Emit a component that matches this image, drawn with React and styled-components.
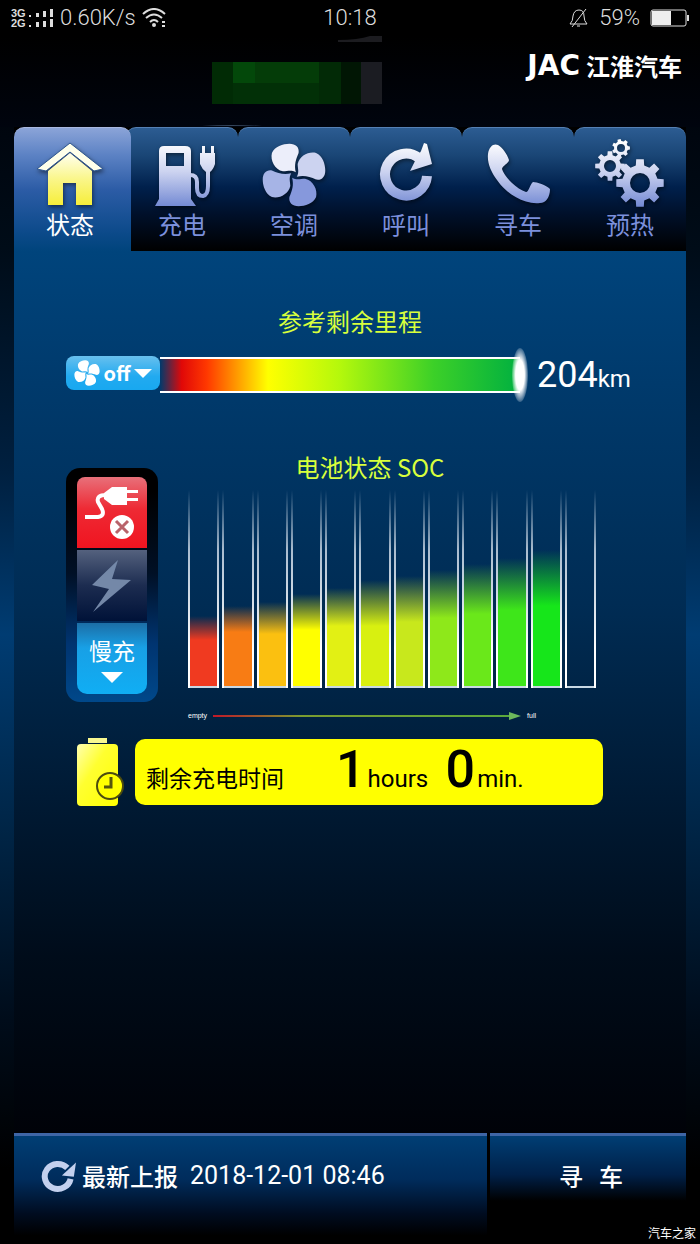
import React, { useState } from "react";
import styled, { createGlobalStyle } from "styled-components";

const tabs = [
  { id: "status", label: "状态" },
  { id: "charge", label: "充电" },
  { id: "climate", label: "空调" },
  { id: "call", label: "呼叫" },
  { id: "find", label: "寻车" },
  { id: "preheat", label: "预热" },
];

const cells = [
  { color: "#f03a20", level: 70, fade: 24 },
  { color: "#f87c14", level: 80, fade: 26 },
  { color: "#fbc010", level: 84, fade: 32 },
  { color: "#ffff00", level: 92, fade: 36 },
  { color: "#e2f014", level: 98, fade: 38 },
  { color: "#d8f010", level: 106, fade: 46 },
  { color: "#c8e81c", level: 110, fade: 46 },
  { color: "#8ee81a", level: 116, fade: 48 },
  { color: "#6ae81a", level: 122, fade: 50 },
  { color: "#3ee61a", level: 128, fade: 52 },
  { color: "#16e61a", level: 136, fade: 56 },
  { color: "transparent", level: 0, fade: 0 },
];

const blade =
  "M2 -3 C-3 -6 -7 -4 -12 -4 C-21 -6 -26 -16 -24 -24 C-21 -31 -12 -34 -5 -34 C2 -34 6 -30 5 -24 C2 -17 0 -11 2 -3Z";

const gearPath = (cx, cy, outer, inner, hole, teeth) => {
  const step = (Math.PI * 2) / teeth;
  const point = (r, a) =>
    `${(cx + r * Math.cos(a)).toFixed(1)} ${(cy + r * Math.sin(a)).toFixed(1)}`;
  let d = "";
  for (let i = 0; i < teeth; i++) {
    const a = i * step;
    d += `${i === 0 ? "M" : "L"}${point(inner, a - step * 0.3)}`;
    d += `L${point(outer, a - step * 0.2)}L${point(outer, a + step * 0.2)}`;
    d += `L${point(inner, a + step * 0.3)}`;
  }
  return `${d}Z M${cx - hole} ${cy}a${hole} ${hole} 0 1 0 ${hole * 2} 0a${hole} ${hole} 0 1 0 ${-hole * 2} 0Z`;
};

const Gradients = () => (
  <HiddenSvg width="0" height="0" aria-hidden="true">
    <defs>
      <linearGradient id="steel" gradientUnits="userSpaceOnUse" x1="0" y1="0" x2="0" y2="66">
        <stop offset="0" stopColor="#ffffff" />
        <stop offset="0.45" stopColor="#ccd3f0" />
        <stop offset="1" stopColor="#6f86d2" />
      </linearGradient>
      <linearGradient id="house" x1="0" y1="0" x2="0" y2="1">
        <stop offset="0" stopColor="#fffff0" />
        <stop offset="0.5" stopColor="#faf68a" />
        <stop offset="1" stopColor="#f6ee3a" />
      </linearGradient>
      <linearGradient id="cell" x1="0" y1="0" x2="1" y2="1">
        <stop offset="0" stopColor="#ffffb0" />
        <stop offset="0.4" stopColor="#ffff30" />
        <stop offset="1" stopColor="#ffff00" />
      </linearGradient>
    </defs>
  </HiddenSvg>
);

const icons = {
  status: (
    <>
      <path d="M13 29 L35 11 L57 29 V63 H41 V41 H28 V63 H13Z" fill="url(#house)" />
      <path
        d="M35 1 L68 27 L59 29 L35 10 L11 29 L2 27Z"
        fill="#ffffea"
        stroke="#2c5590"
        strokeWidth="1"
      />
    </>
  ),
  charge: (
    <g>
      <path
        d="M12 9 Q12 4 17 4 H38 Q44 4 44 9 V57 L49 64 H8 L12 57Z M19 11 V24 H37 V11Z"
        fill="url(#steel)"
        fillRule="evenodd"
      />
      <path
        d="M43 33 Q50 33 50 40 V46 Q50 54 56 54 Q61 53 61 44 V28"
        fill="none"
        stroke="url(#steel)"
        strokeWidth="4"
      />
      <path d="M55 4 H58 V11 H64 V4 H67 V11 H68 V22 Q66 28 63 30 H59 Q55 27 53 22 V11 H55Z" fill="url(#steel)" />
    </g>
  ),
  climate: (
    <g transform="translate(35 33) scale(0.92)">
      <path d={blade} fill="#eceefa" />
      <path d={blade} fill="#ccd3f0" transform="rotate(90)" />
      <path d={blade} fill="#8698dc" transform="rotate(180)" />
      <path d={blade} fill="#a6b4e6" transform="rotate(270)" />
    </g>
  ),
  call: (
    <>
      <path d="M56 34 A21 21 0 1 1 48 16" fill="none" stroke="url(#steel)" strokeWidth="10" />
      <path d="M53 1 L56 2 L61 22 L39 29 L44 19 L50 9Z" fill="url(#steel)" />
    </>
  ),
  find: (
    <path
      d="M5 12 C6 4 11 1 15 3 C20 6 24 12 26 18 C26 21 19 24 19 27 C22 36 34 47 43 50 C46 50 47 42 50 40 C54 40 63 43 67 47 C67 55 63 61 57 61 C40 63 22 50 14 38 C8 30 4 21 5 12Z"
      fill="url(#steel)"
    />
  ),
  preheat: (
    <g fill="url(#steel)" fillRule="evenodd">
      <path d={gearPath(45, 41, 24, 18, 10, 8)} />
      <path d={gearPath(15, 24, 15, 11, 6, 8)} />
      <path d={gearPath(26, 6, 9, 7, 4, 7)} />
    </g>
  ),
};

const StatusBar = () => (
  <Bar>
    <BarGroup>
      <svg width="44" height="20" viewBox="0 0 44 20" fill="#ddd" aria-hidden="true">
        <text x="1" y="9" fontSize="11" fontWeight="700" fontFamily="Liberation Sans">
          3G
        </text>
        <text x="1" y="19" fontSize="11" fontWeight="700" fontFamily="Liberation Sans">
          2G
        </text>
        <path d="M19 7h2v2h-2z M26 5h3v4h-3z M33 3h3v6h-3z M40 1h3v8h-3z M19 17h2v2h-2z M26 14h3v5h-3z M33 13h3v6h-3z M40 11h3v8h-3z" />
      </svg>
      <BarText>0.60K/s</BarText>
      <svg width="24" height="20" viewBox="0 0 24 20" fill="none" stroke="#ddd" strokeWidth="2" aria-hidden="true">
        <path d="M1 6 Q12 -4 23 6" />
        <path d="M4 10 Q12 3 20 10" />
        <path d="M8 14 Q12 10 16 14" />
        <circle cx="12" cy="17" r="1" />
        <path d="M20 14h3 M20 18h3" />
      </svg>
    </BarGroup>
    <BarText>10:18</BarText>
    <BarGroup $end>
      <svg width="20" height="20" viewBox="0 0 20 20" fill="none" stroke="#ddd" strokeWidth="1" aria-hidden="true">
        <path d="M1 16 Q4 13 4 8 Q5 2 10 2 Q15 2 15 8 Q15 13 18 16Z M8 18 H11 M17 1 L3 19" />
      </svg>
      <BarText>59%</BarText>
      <svg width="40" height="18" viewBox="0 0 40 18" aria-hidden="true">
        <rect x="1" y="1" width="35" height="16" rx="2" fill="none" stroke="#ddd" strokeWidth="1" />
        <rect x="2" y="2" width="19" height="14" fill="#eee" />
        <path d="M37 6h2v6h-2z" fill="#ddd" />
      </svg>
    </BarGroup>
  </Bar>
);

const App = () => {
  const [activeTab, setActiveTab] = useState("status");

  return (
    <>
      <GlobalStyle />
      <Gradients />
      <Screen>
        <StatusBar />
        <Brand>
          <svg width="182" height="91" viewBox="0 0 182 91" aria-hidden="true">
            <path d="M136 4 Q156 4 168 0 H180 V6 H136Z" fill="#1c1c20" />
            <path d="M10 26H31V68H10Z" fill="#012b05" />
            <path d="M31 26H117V47H31Z" fill="#043c08" />
            <path d="M31 26H53V47H31Z" fill="#03480a" />
            <path d="M31 47H117V68H31Z" fill="#023007" />
            <path d="M117 26H139V68H117Z" fill="#022a06" />
            <path d="M139 26H159V68H139Z" fill="#011604" />
            <path d="M159 26H180V68H159Z" fill="#1b1c22" />
            <path d="M0 90 Q30 88 60 90Z" fill="#34455c" />
          </svg>
          <Logo>
            <LogoName>JAC</LogoName>江淮汽车
          </Logo>
        </Brand>
        <Tabs>
          {tabs.map(({ id, label }) => (
            <Tab
              key={id}
              type="button"
              $active={activeTab === id}
              aria-pressed={activeTab === id}
              onClick={() => setActiveTab(id)}
            >
              <TabIcon viewBox="0 0 70 66" aria-hidden="true">
                {icons[id]}
              </TabIcon>
              {label}
            </Tab>
          ))}
        </Tabs>
        <Main>
          <Title>参考剩余里程</Title>
          <RangeRow>
            <FanButton type="button">
              <svg width="26" height="26" viewBox="0 0 70 66" aria-hidden="true">
                <g transform="translate(35 33)" fill="#fff">
                  {[0, 90, 180, 270].map((angle) => (
                    <path key={angle} d={blade} transform={`rotate(${angle})`} />
                  ))}
                </g>
              </svg>
              off
              <Arrow />
            </FanButton>
            <RangeBar>
              <RangeThumb />
            </RangeBar>
            <RangeValue>
              204<small>km</small>
            </RangeValue>
          </RangeRow>
          <Title $shifted>电池状态 SOC</Title>
          <BatteryRow>
            <ModePanel>
              <ModeButton type="button" $kind="unplugged" aria-label="未连接">
                <svg width="56" height="54" viewBox="0 0 56 54" aria-hidden="true">
                  <path
                    d="M1 31 H14 Q21 30 18 23 L14 16 Q12 9 22 9"
                    fill="none"
                    stroke="#fff"
                    strokeWidth="4"
                  />
                  <path d="M20 7 L28 1 H43 V4 H54 V7 H43 V12 H54 V15 H43 V19 H28 L20 13Z" fill="#fff" />
                  <circle cx="38" cy="41" r="12" fill="#fff" />
                  <path d="M32 35 L44 47 M44 35 L32 47" stroke="#b8636a" strokeWidth="3" />
                </svg>
              </ModeButton>
              <ModeButton type="button" $kind="fast" aria-label="快充">
                <svg width="40" height="52" viewBox="0 0 40 52" aria-hidden="true">
                  <path d="M26 0 L0 25 L17 29 L1 52 L39 20 L20 19Z" fill="#7488a8" />
                </svg>
              </ModeButton>
              <ModeButton type="button" $kind="slow">
                慢充
                <Arrow $wide />
              </ModeButton>
            </ModePanel>
            <Chart>
              <Cells>
                {cells.map((cell, index) => (
                  <Cell key={index}>
                    <Fill
                      $color={cell.color}
                      $fade={cell.fade}
                      style={{ height: `${cell.level}px` }}
                    />
                  </Cell>
                ))}
              </Cells>
              <Scale>
                <span>empty</span>
                <ScaleLine />
                <ScaleTip />
                <span>full</span>
              </Scale>
            </Chart>
          </BatteryRow>
          <TimeRow>
            <svg width="48" height="68" viewBox="0 0 48 68" aria-hidden="true">
              <path d="M11 0H30V5H11Z" fill="#f8f890" />
              <rect x="0" y="6" width="41" height="62" rx="4" fill="url(#cell)" />
              <circle cx="33" cy="48" r="13" fill="#ffff00" stroke="#4b4b10" strokeWidth="2" />
              <path d="M34 39 V49 H27" fill="none" stroke="#55550c" strokeWidth="3" />
            </svg>
            <TimePanel>
              <TimeLabel>剩余充电时间</TimeLabel>
              <TimeValue>1</TimeValue>
              <TimeUnit $wide>hours</TimeUnit>
              <TimeValue>0</TimeValue>
              <TimeUnit>min.</TimeUnit>
            </TimePanel>
          </TimeRow>
        </Main>
        <Footer>
          <ReportButton type="button">
            <svg width="38" height="36" viewBox="0 0 70 66" aria-hidden="true">
              <path d="M60 40 A24 23 0 1 1 54 20" fill="none" stroke="#c3d0ee" strokeWidth="11" />
              <path d="M70 10 L66 36 L44 34Z" fill="#c3d0ee" />
            </svg>
            最新上报<time>2018-12-01 08:46</time>
          </ReportButton>
          <FindButton type="button">
            <span>寻</span>
            <span>车</span>
          </FindButton>
        </Footer>
        <Watermark>汽车之家</Watermark>
      </Screen>
    </>
  );
};

const GlobalStyle = createGlobalStyle`
  * {
    box-sizing: border-box;
  }
  body {
    margin: 0;
    background: #000;
    font-family: "Noto Sans CJK SC", sans-serif;
  }
  button {
    border: none;
    margin: 0;
    padding: 0;
    font-family: inherit;
    cursor: pointer;
  }
  svg {
    display: block;
    flex-shrink: 0;
  }
`;

const HiddenSvg = styled.svg`
  position: absolute;
`;

const Screen = styled.div`
  position: relative;
  min-height: 100vh;
  display: flex;
  flex-direction: column;
  background: linear-gradient(
    #000 0%,
    #00040c 8%,
    #000c18 20%,
    #002040 38%,
    #003c72 51%,
    #002648 66%,
    #000c1a 82%,
    #000 94%
  );
`;

const Bar = styled.header`
  display: grid;
  grid-template-columns: 1fr auto 1fr;
  align-items: center;
  height: 36px;
  padding: 0 10px;
  background: #000;
`;

const BarGroup = styled.div`
  display: flex;
  align-items: center;
  justify-content: ${({ $end }) => ($end ? "flex-end" : "flex-start")};
  gap: ${({ $end }) => ($end ? "10px" : "6px")};
`;

const BarText = styled.span`
  font-family: Roboto, sans-serif;
  font-size: 22px;
  font-weight: 300;
  line-height: 36px;
  color: #ddd;
`;

const Brand = styled.div`
  display: flex;
  justify-content: space-between;
  height: 91px;
  padding: 0 18px 0 202px;
  background: linear-gradient(#000, #00040e);
`;

const Logo = styled.div`
  display: flex;
  align-items: center;
  gap: 6px;
  height: 58px;
  font-size: 24px;
  font-weight: 700;
  color: #fff;
`;

const LogoName = styled.span`
  font-family: "DejaVu Sans", sans-serif;
  font-size: 28px;
`;

const Tabs = styled.nav`
  display: grid;
  grid-template-columns: repeat(6, 1fr);
  margin: 0 14px;
  background: #000;
`;

const Tab = styled.button`
  position: relative;
  z-index: ${({ $active }) => ($active ? 1 : 0)};
  display: flex;
  flex-direction: column;
  align-items: center;
  height: 124px;
  margin-right: ${({ $active }) => ($active ? "-5px" : "0")};
  padding: 14px ${({ $active }) => ($active ? "5px" : "0")} 0 0;
  border-radius: 10px 10px 0 0;
  border-top: 1px solid ${({ $active }) => ($active ? "#a9b8e0" : "#5580b4")};
  background: ${({ $active }) =>
    $active
      ? "linear-gradient(#8ba4d8, #5c82c4 22%, #2c5ca6 50%, #0c4a8a 85%, #00447c)"
      : "linear-gradient(#2c5c92, #1a4676 22%, #00204c 48%, #00102a 70%, #000)"};
  font-size: 24px;
  line-height: 32px;
  font-weight: 400;
  color: ${({ $active }) => ($active ? "#fff" : "#7c90dc")};
`;

const TabIcon = styled.svg`
  width: 70px;
  height: 66px;
  overflow: visible;
  filter: drop-shadow(1px 2px 2px rgba(0, 0, 0, 0.5));
`;

const Main = styled.main`
  flex: 1;
  margin: 0 14px;
  padding: 54px 52px 0;
  background: linear-gradient(
    #00447c 0%,
    #003a6c 15%,
    #002c54 40%,
    #001a34 62%,
    #000c1a 80%,
    #000208 100%
  );
`;

const Title = styled.h2`
  margin: 0;
  padding-left: ${({ $shifted }) => ($shifted ? "40px" : "0")};
  font-size: 24px;
  line-height: 32px;
  font-weight: 400;
  text-align: center;
  color: #d8ff3c;
`;

const RangeRow = styled.div`
  display: flex;
  align-items: center;
  height: 76px;
  margin-bottom: 38px;
`;

const FanButton = styled.button`
  display: flex;
  align-items: center;
  justify-content: center;
  gap: 4px;
  width: 94px;
  height: 34px;
  margin-bottom: 4px;
  border-radius: 8px;
  background: linear-gradient(#68c0ee, #22aaf0 60%, #18a8f0);
  font-size: 20px;
  line-height: 24px;
  font-weight: 700;
  color: #fff;
`;

const Arrow = styled.i`
  border: ${({ $wide }) => ($wide ? "11px" : "9px")} solid transparent;
  border-top-color: #fff;
  border-bottom-width: 0;
`;

const RangeBar = styled.div`
  position: relative;
  flex: 1;
  height: 36px;
  border: solid #fff;
  border-width: 2px 0;
  background: linear-gradient(
    90deg,
    #003a6c,
    #e00808 6%,
    #ff3800 13%,
    #ffff00 30%,
    #b4f80c 50%,
    #3cd028 76%,
    #00b040 100%
  );
`;

const RangeThumb = styled.div`
  position: absolute;
  top: -11px;
  right: -8px;
  width: 16px;
  height: 54px;
  border-radius: 50%;
  background: radial-gradient(closest-side, #fff 55%, rgba(255, 255, 255, 0.2));
`;

const RangeValue = styled.div`
  width: 114px;
  padding: 4px 0 0 17px;
  font-family: Roboto, sans-serif;
  font-size: 36px;
  line-height: 40px;
  white-space: nowrap;
  color: #fff;
  small {
    font-size: 24px;
  }
`;

const BatteryRow = styled.div`
  display: flex;
  gap: 30px;
  margin-top: -15px;
`;

const ModePanel = styled.div`
  display: flex;
  flex-direction: column;
  flex-shrink: 0;
  gap: 2px;
  width: 92px;
  height: 234px;
  padding: 9px 11px 8px;
  border-radius: 14px;
  background: linear-gradient(#000 10%, #001026 45%, #003470 75%, #00488a);
`;

const modeStyles = {
  unplugged: "linear-gradient(#e8707a, #ee2a34 45%, #f01420)",
  fast: "linear-gradient(#54617e, #1c2c50 50%, #001238)",
  slow: "linear-gradient(#1c6ea6, #18a0e6 35%, #10aef4)",
};

const ModeButton = styled.button`
  display: flex;
  flex-direction: column;
  align-items: center;
  justify-content: center;
  gap: 6px;
  height: 71px;
  border-radius: ${({ $kind }) =>
    $kind === "unplugged" ? "8px 8px 0 0" : $kind === "slow" ? "0 0 10px 10px" : "0"};
  background: ${({ $kind }) => modeStyles[$kind]};
  font-size: 23px;
  line-height: 32px;
  color: #fff;
`;

const Chart = styled.div`
  flex: 1;
  min-width: 0;
  padding: 22px 38px 0 0;
`;

const Cells = styled.div`
  display: grid;
  grid-template-columns: repeat(12, 1fr);
  gap: 3px;
`;

const Cell = styled.div`
  display: flex;
  align-items: flex-end;
  height: 198px;
  padding: 0 2px 2px;
  background:
    linear-gradient(rgba(255, 255, 255, 0), #a9bccf 30%, #fff 80%) left / 2px 100% no-repeat,
    linear-gradient(rgba(255, 255, 255, 0), #a9bccf 30%, #fff 80%) right / 2px 100% no-repeat,
    linear-gradient(#c8d8e4, #c8d8e4) bottom / 100% 2px no-repeat;
`;

const Fill = styled.div`
  flex: 1;
  background: linear-gradient(transparent, ${({ $color, $fade }) => `${$color} ${$fade}px`});
`;

const Scale = styled.div`
  display: flex;
  align-items: center;
  margin-top: 22px;
  padding-right: 60px;
  font-family: "Liberation Sans", sans-serif;
  font-size: 7px;
  line-height: 12px;
  color: #fff;
`;

const ScaleLine = styled.div`
  flex: 1;
  height: 2px;
  margin-left: 6px;
  background: linear-gradient(90deg, #c01828, #7a9c30 30%, #5ca83c);
`;

const ScaleTip = styled.i`
  margin-right: 6px;
  border: 4px solid transparent;
  border-left: 12px solid #6cb85c;
  border-right-width: 0;
`;

const TimeRow = styled.div`
  display: flex;
  align-items: center;
  gap: 10px;
  margin: 16px 31px 0 11px;
`;

const TimePanel = styled.div`
  flex: 1;
  display: flex;
  align-items: baseline;
  height: 66px;
  padding-left: 11px;
  border-radius: 10px;
  background: #ffff00;
  font-family: Roboto, "Noto Sans CJK SC", sans-serif;
  line-height: 62px;
  white-space: nowrap;
  color: #000;
`;

const TimeLabel = styled.span`
  width: 190px;
  font-size: 23px;
`;

const TimeValue = styled.strong`
  font-size: 52px;
  font-weight: 500;
`;

const TimeUnit = styled.span`
  width: ${({ $wide }) => ($wide ? "80px" : "auto")};
  padding-left: 2px;
  font-size: 24px;
`;

const Footer = styled.footer`
  display: grid;
  grid-template-columns: 473fr 196fr;
  gap: 3px;
  margin: 0 14px;
  background: #000;
`;

const FooterButton = styled.button`
  display: flex;
  align-items: center;
  height: 111px;
  padding-bottom: 30px;
  border-top: 3px solid #3f66a6;
  font-size: 24px;
  font-weight: 500;
  color: #fff;
`;

const ReportButton = styled(FooterButton)`
  gap: 6px;
  padding-left: 24px;
  background: linear-gradient(#003e74, #002c5c 40%, #000c20 72%, #000 92%);
  time {
    margin-left: 6px;
    font-family: Roboto, sans-serif;
    font-size: 25px;
    font-weight: 400;
  }
`;

const FindButton = styled(FooterButton)`
  justify-content: center;
  gap: 16px;
  padding-left: 6px;
  background: linear-gradient(#003e74, #002048 36%, #000 60%);
`;

const Watermark = styled.div`
  position: absolute;
  right: 4px;
  bottom: 2px;
  font-size: 12px;
  line-height: 18px;
  color: #fff;
`;

export default App;
